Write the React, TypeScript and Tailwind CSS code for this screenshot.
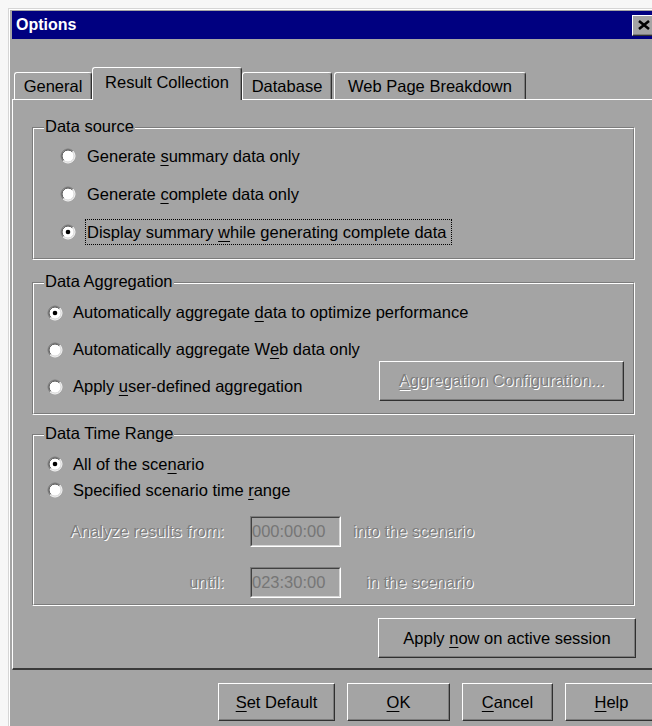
import type { ReactNode } from 'react';

const face = 'bg-[#a4a4a4]';
const raised =
  'border border-t-white border-l-white border-r-[#303030] border-b-[#303030] shadow-[inset_-1px_-1px_0_#7c7c7c]';
const disabledText = 'text-[#7e7e7e] [text-shadow:1px_1px_0_#ffffff]';

function Radio({ checked }: { checked?: boolean }) {
  return (
    <svg width="16" height="16" viewBox="0 0 16 16" className="shrink-0">
      <circle cx="8" cy="8" r="6.5" fill="#fff" />
      <path d="M3.05 12.95A7 7 0 0 1 12.95 3.05" stroke="#7c7c7c" fill="none" />
      <path d="M12.95 3.05A7 7 0 0 1 3.05 12.95" stroke="#fff" fill="none" />
      <path d="M3.757 12.243A6 6 0 0 1 12.243 3.757" stroke="#404040" fill="none" />
      <path d="M12.243 3.757A6 6 0 0 1 3.757 12.243" stroke="#d8d8d8" fill="none" />
      {checked && <circle cx="8" cy="8" r="2.3" fill="#000" />}
    </svg>
  );
}

function U({ children }: { children: ReactNode }) {
  return <span className="underline decoration-1 underline-offset-[3px]">{children}</span>;
}

function Label({ children, focused }: { children: ReactNode; focused?: boolean }) {
  return (
    <span
      className={
        'flex h-[26px] items-center border px-[1px] ' +
        (focused ? 'border-dotted border-black' : 'border-transparent')
      }
    >
      {children}
    </span>
  );
}

function Group({
  title,
  className,
  children,
}: {
  title: string;
  className: string;
  children: ReactNode;
}) {
  return (
    <div
      className={
        'relative ml-[19px] w-[603px] border border-t-[#7c7c7c] border-l-[#7c7c7c] border-r-white border-b-white ' +
        className
      }
    >
      <div className="h-full border border-t-white border-l-white border-r-[#7c7c7c] border-b-[#7c7c7c]">
        <span className={'absolute -top-[10px] left-[11px] px-[1px] leading-[17px] ' + face}>
          {title}
        </span>
        {children}
      </div>
    </div>
  );
}

function TimeBox({ value, className }: { value: string; className?: string }) {
  return (
    <div
      className={
        'h-[31px] w-[91px] border border-t-[#7c7c7c] border-l-[#7c7c7c] border-r-white border-b-white ' +
        (className ?? '')
      }
    >
      <div className="flex h-full items-center border border-t-[#404040] border-l-[#404040] border-r-[#d8d8d8] border-b-[#d8d8d8] text-[#767676]">
        {value}
      </div>
    </div>
  );
}

function Tab({
  children,
  width,
  selected,
  className,
}: {
  children: ReactNode;
  width: string;
  selected?: boolean;
  className?: string;
}) {
  return (
    <div
      className={
        'flex items-center justify-center rounded-t-[3px] border-t border-l border-r border-t-white border-l-white border-r-[#303030] shadow-[inset_-1px_0_0_#7c7c7c] ' +
        face +
        ' ' +
        width +
        ' ' +
        (selected ? 'relative z-10 -mb-[1px] h-[33px] pb-[4px]' : 'h-[27px]') +
        ' ' +
        (className ?? '')
      }
    >
      {children}
    </div>
  );
}

export default function App() {
  return (
    <div className="h-[726px] w-[652px] overflow-hidden bg-[#f7f7f7] pl-2 pt-2 font-['Liberation_Sans',Arial,sans-serif] text-[16.5px] text-black">
      <div className={'h-[740px] w-[652px] border-t border-l border-[#d6d6d6] ' + face}>
        <div className="h-full border-t border-l border-white pl-[2px] pr-[2px] pt-[1px]">
          {/* caption */}
          <div className="flex h-[28px] items-center bg-[#000080] pl-[4px]">
            <span className="text-[16px] font-bold text-white">Options</span>
            <div className={'ml-auto mr-[2px] flex h-[21px] w-[24px] items-center justify-center ' + face + ' ' + raised}>
              <svg width="14" height="10" viewBox="0 0 14 10">
                <path d="M2 1L12 9M12 1L2 9" stroke="#000" strokeWidth="2.6" />
              </svg>
            </div>
          </div>

          {/* tabs */}
          <div className="mt-[28px] flex h-[32px] items-end pl-[2px]">
            <Tab width="w-[78px]">General</Tab>
            <Tab width="w-[150px]" selected>
              Result Collection
            </Tab>
            <Tab width="w-[90px]">Database</Tab>
            <Tab width="w-[192px]" className="ml-[2px]">
              Web Page Breakdown
            </Tab>
          </div>

          <div className="border-t border-l border-white border-b-2 border-b-[#3a3a3a] pb-[10px]">
            <Group title="Data source" className="mt-[27px] h-[133px]">
              <div className="pt-[8px]">
                <div className="flex h-[38px] items-center gap-[9px] pl-[26px]">
                  <Radio />
                  <Label>
                    <span>
                      Generate <U>s</U>ummary data only
                    </span>
                  </Label>
                </div>
                <div className="flex h-[38px] items-center gap-[9px] pl-[26px]">
                  <Radio />
                  <Label>
                    <span>
                      Generate <U>c</U>omplete data only
                    </span>
                  </Label>
                </div>
                <div className="flex h-[38px] items-center gap-[9px] pl-[26px]">
                  <Radio checked />
                  <Label focused>
                    <span className="pr-[3px]">
                      Display summary <U>w</U>hile generating complete data
                    </span>
                  </Label>
                </div>
              </div>
            </Group>

            <Group title="Data Aggregation" className="mt-[22px] h-[133px]">
              <div className="pt-[10px]">
                <div className="flex h-[37px] items-center gap-[8px] pl-[13px]">
                  <Radio checked />
                  <Label>
                    <span>
                      Automatically aggregate <U>d</U>ata to optimize performance
                    </span>
                  </Label>
                </div>
                <div className="flex h-[37px] items-center gap-[8px] pl-[13px]">
                  <Radio />
                  <Label>
                    <span>
                      Automatically aggregate W<U>e</U>b data only
                    </span>
                  </Label>
                </div>
                <div className="flex h-[37px] items-center gap-[8px] pl-[13px]">
                  <Radio />
                  <Label>
                    <span>
                      Apply <U>u</U>ser-defined aggregation
                    </span>
                  </Label>
                  <div
                    className={
                      'mb-[12px] ml-auto mr-[9px] flex h-[40px] w-[245px] items-center justify-center ' + raised
                    }
                  >
                    <span className={disabledText}>
                      <U>A</U>ggregation Configuration...
                    </span>
                  </div>
                </div>
              </div>
            </Group>

            <Group title="Data Time Range" className="mt-[19px] h-[172px]">
              <div className="pt-[15px]">
                <div className="flex h-[26px] items-center gap-[8px] pl-[13px]">
                  <Radio checked />
                  <Label>
                    <span>
                      All of the sce<U>n</U>ario
                    </span>
                  </Label>
                </div>
                <div className="flex h-[26px] items-center gap-[8px] pl-[13px]">
                  <Radio />
                  <Label>
                    <span>
                      Specified scenario time <U>r</U>ange
                    </span>
                  </Label>
                </div>
                <div className="mt-[13px] flex items-center">
                  <span className={'w-[190px] text-right ' + disabledText}>Analyze results from:</span>
                  <TimeBox value="000:00:00" className="ml-[26px]" />
                  <span className={'ml-[12px] ' + disabledText}>into the scenario</span>
                </div>
                <div className="mt-[20px] flex items-center">
                  <span className={'w-[190px] text-right ' + disabledText}>until:</span>
                  <TimeBox value="023:30:00" className="ml-[26px]" />
                  <span className={'ml-[25px] ' + disabledText}>in the scenario</span>
                </div>
              </div>
            </Group>

            <button type="button" className={'ml-[365px] mt-[12px] block h-[40px] w-[258px] ' + raised}>
              <span>
                Apply <U>n</U>ow on active session
              </span>
            </button>
          </div>

          <div className="mt-[13px] flex justify-end gap-[12px]">
            <button type="button" className={'h-[38px] w-[117px] ' + raised}>
              <U>S</U>et Default
            </button>
            <button type="button" className={'h-[38px] w-[103px] ' + raised}>
              <U>O</U>K
            </button>
            <button type="button" className={'h-[38px] w-[91px] ' + raised}>
              <U>C</U>ancel
            </button>
            <button type="button" className={'h-[38px] w-[93px] ' + raised}>
              <U>H</U>elp
            </button>
          </div>
        </div>
      </div>
    </div>
  );
}
